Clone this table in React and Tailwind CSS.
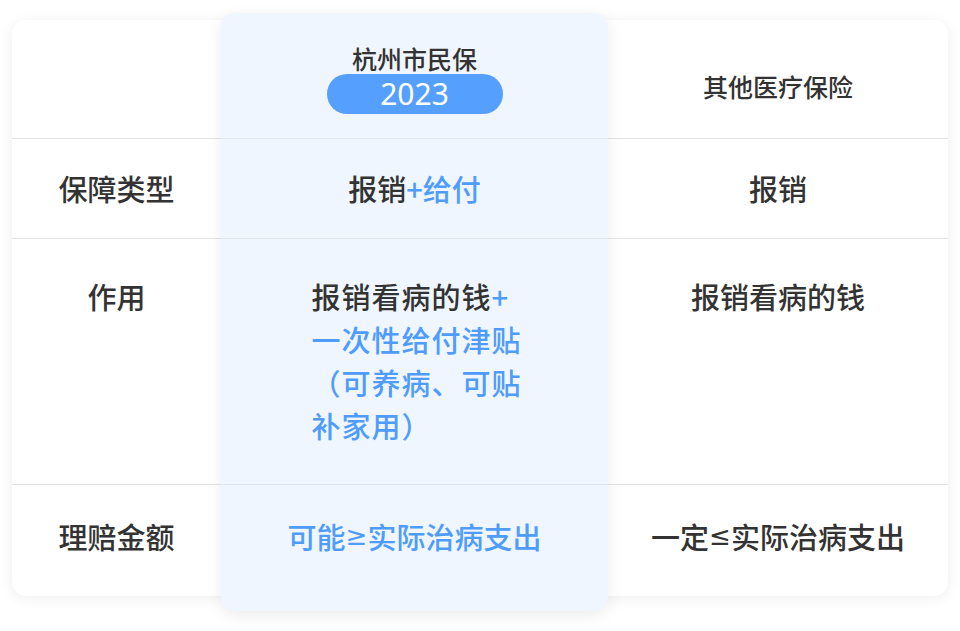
export default function App() {
  const font = { fontFamily: '"Noto Sans CJK SC", "Noto Sans", sans-serif' };
  const sym = { fontFamily: '"DejaVu Sans", "Liberation Sans", sans-serif' };
  return (
    <div className="w-[960px] h-[631px] bg-white pt-[20px] px-[12px]" style={font}>
      <div className="flex h-[576px] w-[936px] rounded-[14px] bg-white shadow-[0_2px_14px_rgba(0,0,0,0.07)] text-[#333333] font-medium">
        {/* Left label column */}
        <div className="w-[209px] flex flex-col">
          <div className="h-[119px] border-b border-[#e4e4e4]" />
          <div className="h-[100px] border-b border-[#e4e4e4] flex items-center justify-center text-[29px] leading-[43px]">
            保障类型
          </div>
          <div className="h-[246px] border-b border-[#e4e4e4] flex justify-center pt-[36px] text-[29px] leading-[43px]">
            作用
          </div>
          <div className="h-[111px] flex justify-center pt-[30px] text-[29px] leading-[43px]">
            理赔金额
          </div>
        </div>

        {/* Highlighted middle column */}
        <div className="relative z-10 w-[387px] -mt-[7px] -mb-[15px] flex flex-col rounded-[14px] bg-[#f0f6ff] shadow-[0_4px_16px_rgba(0,0,0,0.08)]">
          <div className="h-[126px] border-b border-[#e2e6ec] flex flex-col items-center pt-[29px]">
            <div className="text-[25px] leading-[32px] text-[#333333]">杭州市民保</div>
            <div className="w-[176px] h-[40px] rounded-full bg-[#559ffe] flex items-center justify-center text-white text-[30px] leading-none font-normal" style={{ fontFamily: '"Noto Sans", "Open Sans", sans-serif' }}>
              2023
            </div>
          </div>
          <div className="h-[100px] border-b border-[#e2e6ec] flex items-center justify-center text-[29px] leading-[43px]">
            <span>报销</span>
            <span className="text-[#4e9cfd]">+给付</span>
          </div>
          <div className="h-[246px] border-b border-[#e2e6ec] flex justify-center pt-[36px]">
            <div className="text-[29px] leading-[43px] tracking-[1px] text-left pl-[4px]">
              <div>
                报销看病的钱<span className="text-[#4e9cfd]">+</span>
              </div>
              <div className="text-[#4e9cfd]">一次性给付津贴</div>
              <div className="text-[#4e9cfd]">（可养病、可贴</div>
              <div className="text-[#4e9cfd]">补家用）</div>
            </div>
          </div>
          <div className="h-[126px] flex justify-center pt-[30px] text-[29px] leading-[43px] text-[#4e9cfd]">
            可能<span className="text-[26px]" style={sym}>≥</span>实际治病支出
          </div>
        </div>

        {/* Right column */}
        <div className="w-[340px] flex flex-col">
          <div className="h-[119px] border-b border-[#e4e4e4] flex items-center justify-center pt-[14px] text-[25px] leading-[32px]">
            其他医疗保险
          </div>
          <div className="h-[100px] border-b border-[#e4e4e4] flex items-center justify-center text-[29px] leading-[43px]">
            报销
          </div>
          <div className="h-[246px] border-b border-[#e4e4e4] flex justify-center pt-[36px] text-[29px] leading-[43px]">
            报销看病的钱
          </div>
          <div className="h-[111px] flex justify-center pt-[30px] text-[29px] leading-[43px]">
            一定<span className="text-[26px]" style={sym}>≤</span>实际治病支出
          </div>
        </div>
      </div>
    </div>
  );
}
